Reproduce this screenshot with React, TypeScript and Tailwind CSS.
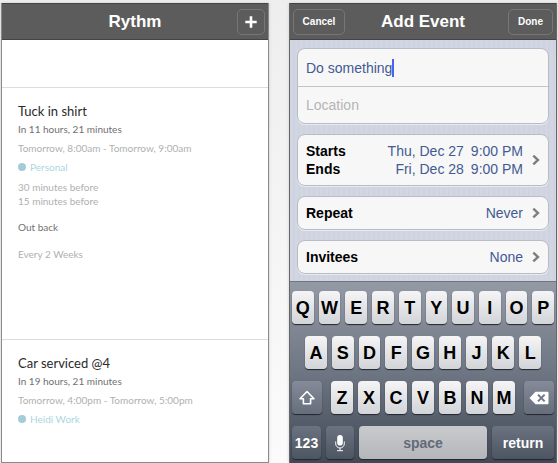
import { useState } from 'react';
import type { ReactNode } from 'react';
import clsx from 'clsx';

interface CalendarEvent {
  title: string;
  countdown: string;
  range: string;
  calendar: string;
  reminders?: string[];
  notes?: string;
  repeat?: string;
}

const events: CalendarEvent[] = [
  {
    title: 'Tuck in shirt',
    countdown: 'In 11 hours, 21 minutes',
    range: 'Tomorrow, 8:00am - Tomorrow, 9:00am',
    calendar: 'Personal',
    reminders: ['30 minutes before', '15 minutes before'],
    notes: 'Out back',
    repeat: 'Every 2 Weeks',
  },
  {
    title: 'Car serviced @4',
    countdown: 'In 19 hours, 21 minutes',
    range: 'Tomorrow, 4:00pm - Tomorrow, 5:00pm',
    calendar: 'Heidi Work',
  },
];

function TopBar({ title, left, right }: { title: string; left?: ReactNode; right: ReactNode }) {
  return (
    <header className="grid h-[37px] grid-cols-[1fr_auto_1fr] items-center border-t border-b border-t-[#444] border-b-[#444] bg-[#5c5c5c] px-[3px]">
      <div className="flex">{left}</div>
      <h1 className="text-[17px] leading-5 font-bold text-white">{title}</h1>
      <div className="flex justify-end">{right}</div>
    </header>
  );
}

function BarButton({ children, className, label }: { children: ReactNode; className: string; label?: string }) {
  return (
    <button
      type="button"
      aria-label={label}
      className={clsx(
        'flex h-[26px] items-center justify-center rounded-[5px] border border-[#777] text-[10px] font-bold text-white',
        className
      )}
    >
      {children}
    </button>
  );
}

function EventItem({ event }: { event: CalendarEvent }) {
  return (
    <li className="border-t border-[#dcdcdc] px-4 pt-[13px] pb-[77px] text-[10px] leading-4 text-[#b0b0b0] last:pb-8">
      <h2 className="text-[13px] leading-5 text-[#2a2a2a]">{event.title}</h2>
      <p className="text-[#707070]">{event.countdown}</p>
      <p className="mt-[3px]">{event.range}</p>
      <p className="mt-[3px] flex items-center gap-1 text-[#aad6e2]">
        <span className="size-2 rounded-full bg-[#a3ccd9]" />
        {event.calendar}
      </p>
      {event.reminders && (
        <ul className="mt-[5px] leading-[14px]">
          {event.reminders.map((reminder) => (
            <li key={reminder}>{reminder}</li>
          ))}
        </ul>
      )}
      {event.notes && <p className="mt-[11px] text-[#707070]">{event.notes}</p>}
      {event.repeat && <p className="mt-[11px]">{event.repeat}</p>}
    </li>
  );
}

function Chevron() {
  return (
    <svg viewBox="0 0 8 12" className="h-3 w-2 shrink-0" fill="none" stroke="#7f7f7f" strokeWidth="2.4" aria-hidden="true">
      <path d="M1.3 1.6 6 6 1.3 10.4" />
    </svg>
  );
}

const cardStyle = 'rounded-lg border border-[#b9bcc5] bg-[#f7f7f7] shadow-[0_1px_0_#e9ebf1]';

function LinkRow({ children, className }: { children: ReactNode; className: string }) {
  return (
    <button type="button" className={clsx(cardStyle, 'flex w-full items-center gap-[9px] px-2', className)}>
      <span className="flex-1">{children}</span>
      <Chevron />
    </button>
  );
}

function Detail({ label, value, time }: { label: string; value: string; time?: string }) {
  return (
    <span className="flex items-baseline justify-between text-sm leading-[18px]">
      <span className="font-bold text-black">{label}</span>
      <span className="flex gap-[7px] text-[#435a93]">
        <span>{value}</span>
        {time && <span>{time}</span>}
      </span>
    </span>
  );
}

const keyBase =
  'flex h-[33px] min-w-0 items-center justify-center rounded-[4px] font-bold shadow-[0_1px_1px_#20252d]';
const darkKey = 'bg-linear-to-b from-[#858b98] to-[#666d7b] text-white';
const darkerKey = 'bg-linear-to-b from-[#6c7380] to-[#4d5562] text-white';

function LetterKeys({ letters }: { letters: string }) {
  return (
    <>
      {letters.split('').map((letter) => (
        <button
          key={letter}
          type="button"
          className={clsx(keyBase, 'flex-1 bg-linear-to-b from-[#f5f5f6] to-[#d3d4d8] text-lg text-black')}
        >
          {letter}
        </button>
      ))}
    </>
  );
}

function Keyboard() {
  return (
    <div className="flex flex-col gap-3 border-t border-[#6f747e] bg-linear-to-b from-[#949aa5] via-[#6e7683] to-[#414956] px-[2px] pt-[9px] pb-1">
      <div className="flex gap-[5px]">
        <LetterKeys letters="QWERTYUIOP" />
      </div>
      <div className="flex gap-[5px] px-[13px]">
        <LetterKeys letters="ASDFGHJKL" />
      </div>
      <div className="flex justify-between gap-[9px]">
        <button type="button" aria-label="Shift" className={clsx(keyBase, darkKey, 'w-[30px]')}>
          <svg viewBox="0 0 18 16" className="h-4 w-[18px]" fill="none" stroke="#fff" strokeWidth="1.6" strokeLinejoin="round">
            <path d="M9 1.5 16 8.7h-3.4v5H5.4v-5H2z" />
          </svg>
        </button>
        <div className="flex flex-1 gap-[5px]">
          <LetterKeys letters="ZXCVBNM" />
        </div>
        <button type="button" aria-label="Delete" className={clsx(keyBase, darkKey, 'w-[30px]')}>
          <svg viewBox="0 0 20 14" className="h-[14px] w-5">
            <path d="M6.5.7h12a1 1 0 0 1 1 1v10.6a1 1 0 0 1-1 1h-12L.5 7z" fill="#fff" />
            <path d="m9 3.6 6.6 6.8m0-6.8L9 10.4" stroke="#70778a" strokeWidth="2" />
          </svg>
        </button>
      </div>
      <div className="flex gap-[5px]">
        <button type="button" className={clsx(keyBase, darkerKey, 'w-[29px] text-sm')}>
          123
        </button>
        <button type="button" aria-label="Dictate" className={clsx(keyBase, darkerKey, 'w-[28px]')}>
          <svg viewBox="0 0 12 18" className="h-[18px] w-3" fill="none" stroke="#fff">
            <rect x="3.2" y="1" width="5.6" height="10.5" rx="2.8" fill="#fff" stroke="none" />
            <path d="M1.7 7.5v2.2a4.3 4.3 0 0 0 8.6 0V7.5M6 14v2.6M3 16.7h6" strokeWidth="1" />
          </svg>
        </button>
        <button
          type="button"
          className={clsx(keyBase, 'flex-1 bg-linear-to-b from-[#c9cacc] to-[#b4b6b9] text-sm text-[#626b7a]')}
        >
          space
        </button>
        <button type="button" className={clsx(keyBase, darkerKey, 'w-[62px] text-sm')}>
          return
        </button>
      </div>
    </div>
  );
}

export default function App() {
  const [title, setTitle] = useState('Do something');
  const [location, setLocation] = useState('');

  return (
    <main className="grid min-h-screen grid-cols-2 gap-5 bg-linear-to-b from-[#eeeeee] to-[#fbfbfb] px-px pt-[3px] font-['Liberation_Sans',Arial,sans-serif]">
      <section className="border-x border-b border-[#8a8a8a] bg-white shadow-[0_0_3px_#ccc]">
        <TopBar
          title="Rythm"
          right={
            <BarButton label="Add event" className="w-7">
              <svg viewBox="0 0 12 12" className="size-3" stroke="#fff" strokeWidth="2.6">
                <path d="M6 0.3v11.4M0.3 6h11.4" />
              </svg>
            </BarButton>
          }
        />
        <ul className="pt-[47px] font-['Lato',sans-serif]">
          {events.map((event) => (
            <EventItem key={event.title} event={event} />
          ))}
        </ul>
      </section>

      <section className="flex flex-col border-x border-[#666] bg-[#d0d4e0] shadow-[0_0_3px_#ccc]">
        <TopBar
          title="Add Event"
          left={<BarButton className="w-[52px]">Cancel</BarButton>}
          right={<BarButton className="w-[45px]">Done</BarButton>}
        />
        <form className="flex flex-1 flex-col gap-[10px] bg-[repeating-linear-gradient(90deg,#d2d6e2_0_3px,#cfd3df_3px_5px)] px-[7px] pt-2 pb-[7px]">
          <div className={clsx(cardStyle, 'text-sm')}>
            <div className="flex h-[37px] items-center px-2">
              <input
                type="text"
                aria-label="Title"
                value={title}
                onChange={(e) => setTitle(e.target.value)}
                className="field-sizing-content text-[#435a93] caret-transparent outline-none"
              />
              <span className="h-[18px] w-0.5 bg-[#4a63f0]" />
            </div>
            <div className="flex h-[37px] items-center border-t border-[#c4c4c6] px-2">
              <input
                type="text"
                aria-label="Location"
                placeholder="Location"
                value={location}
                onChange={(e) => setLocation(e.target.value)}
                className="w-full text-[#435a93] outline-none placeholder:text-[#b5b5b5]"
              />
            </div>
          </div>
          <LinkRow className="h-[52px]">
            <Detail label="Starts" value="Thu, Dec 27" time="9:00 PM" />
            <Detail label="Ends" value="Fri, Dec 28" time="9:00 PM" />
          </LinkRow>
          <LinkRow className="h-[34px]">
            <Detail label="Repeat" value="Never" />
          </LinkRow>
          <LinkRow className="h-[34px]">
            <Detail label="Invitees" value="None" />
          </LinkRow>
        </form>
        <Keyboard />
      </section>
    </main>
  );
}
